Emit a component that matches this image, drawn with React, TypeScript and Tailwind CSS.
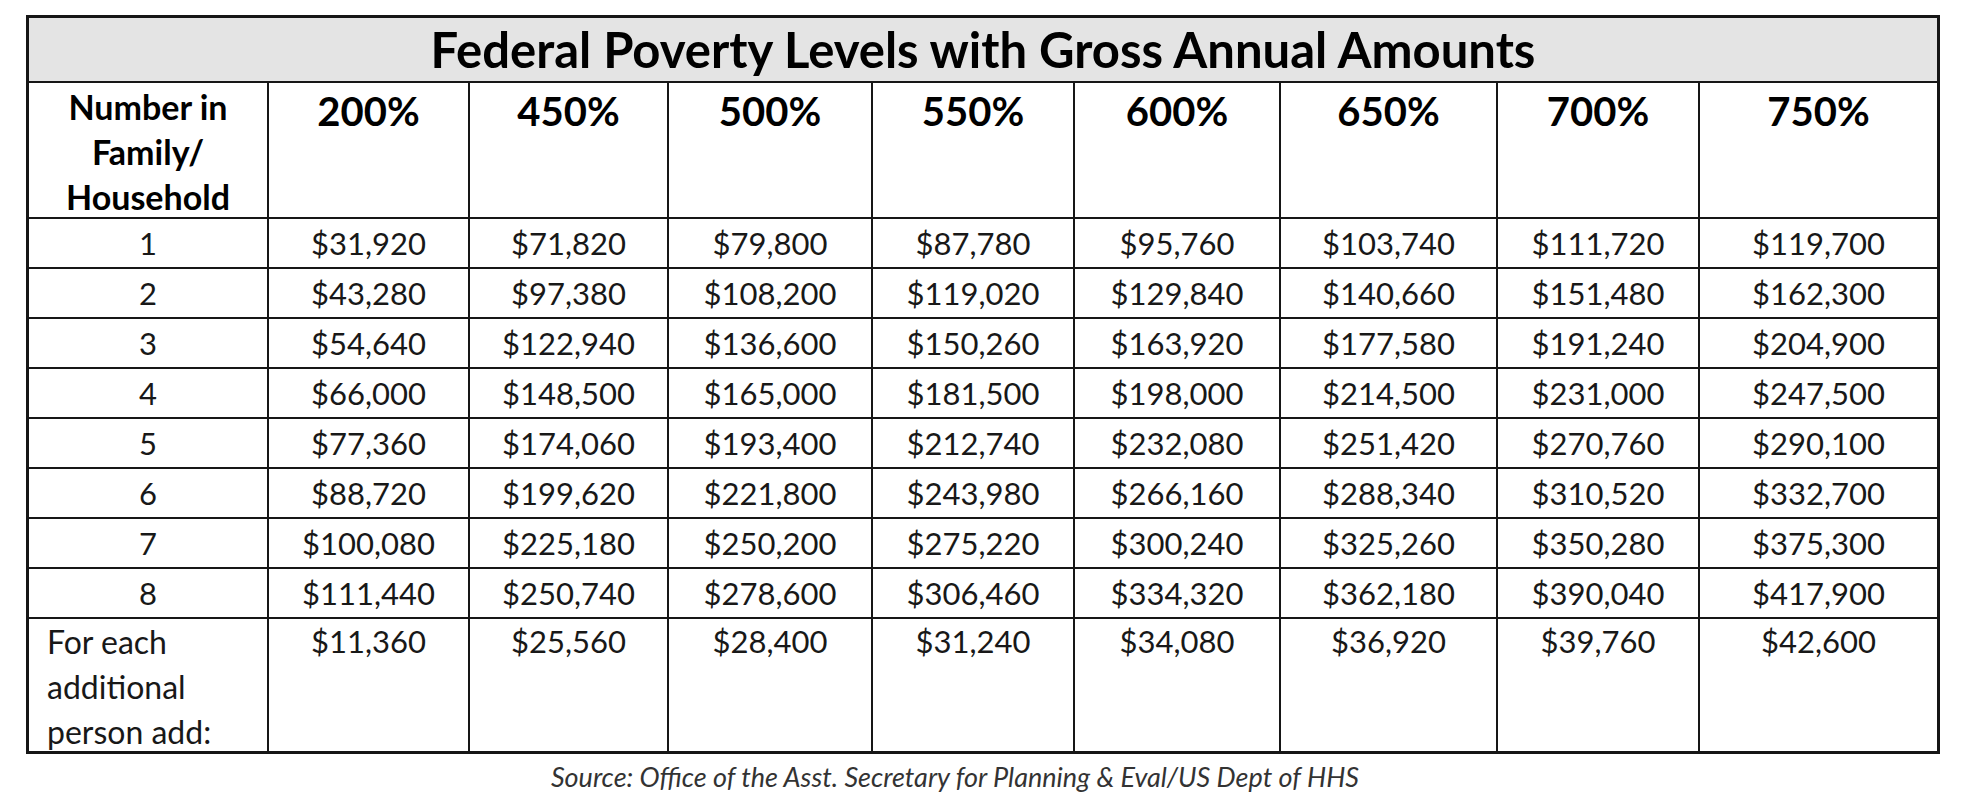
const PCTS = ["200%", "450%", "500%", "550%", "600%", "650%", "700%", "750%"];

const ROWS: string[][] = [
  ["1", "$31,920", "$71,820", "$79,800", "$87,780", "$95,760", "$103,740", "$111,720", "$119,700"],
  ["2", "$43,280", "$97,380", "$108,200", "$119,020", "$129,840", "$140,660", "$151,480", "$162,300"],
  ["3", "$54,640", "$122,940", "$136,600", "$150,260", "$163,920", "$177,580", "$191,240", "$204,900"],
  ["4", "$66,000", "$148,500", "$165,000", "$181,500", "$198,000", "$214,500", "$231,000", "$247,500"],
  ["5", "$77,360", "$174,060", "$193,400", "$212,740", "$232,080", "$251,420", "$270,760", "$290,100"],
  ["6", "$88,720", "$199,620", "$221,800", "$243,980", "$266,160", "$288,340", "$310,520", "$332,700"],
  ["7", "$100,080", "$225,180", "$250,200", "$275,220", "$300,240", "$325,260", "$350,280", "$375,300"],
  ["8", "$111,440", "$250,740", "$278,600", "$306,460", "$334,320", "$362,180", "$390,040", "$417,900"],
];

const EXTRA = ["$11,360", "$25,560", "$28,400", "$31,240", "$34,080", "$36,920", "$39,760", "$42,600"];

export default function App() {
  return (
    <div className="min-h-screen bg-white font-['Lato',sans-serif] text-[#181818]">
      <div className="pl-[26px] pt-[15px]">
        <div className="grid w-[1914px] grid-cols-[238px_199px_197px_202px_200px_204px_215px_200px_237px] grid-rows-[63px_134px_repeat(8,48px)_132px] gap-[2px] border-[3px] border-[#161616] bg-[#161616]">
          <div className="col-span-9 flex items-center justify-center bg-[#e4e4e4] text-[49px] font-bold leading-none text-black">
            Federal Poverty Levels with Gross Annual Amounts
          </div>

          <div className="bg-white pt-[1px] text-center text-[34px] font-bold leading-[45px] text-black">
            Number in
            <br />
            Family/
            <br />
            Household
          </div>
          {PCTS.map((p) => (
            <div key={p} className="bg-white pt-[6px] text-center text-[40px] font-bold leading-[45px] text-black">
              {p}
            </div>
          ))}

          {ROWS.map((row) =>
            row.map((v, i) => (
              <div key={row[0] + "-" + i} className="flex items-center justify-center bg-white text-[31px] leading-none">
                {v}
              </div>
            ))
          )}

          <div className="bg-white pl-[18px] text-[32px] leading-[45px]">
            For each
            <br />
            additional
            <br />
            person add:
          </div>
          {EXTRA.map((v) => (
            <div key={v} className="bg-white text-center text-[31px] leading-[45px]">
              {v}
            </div>
          ))}
        </div>

        <div className="w-[1914px] pr-[56px] pt-[6px] text-center text-[27px] italic leading-[34px] text-[#333]">
          Source: Office of the Asst. Secretary for Planning &amp; Eval/US Dept of HHS
        </div>
      </div>
    </div>
  );
}
